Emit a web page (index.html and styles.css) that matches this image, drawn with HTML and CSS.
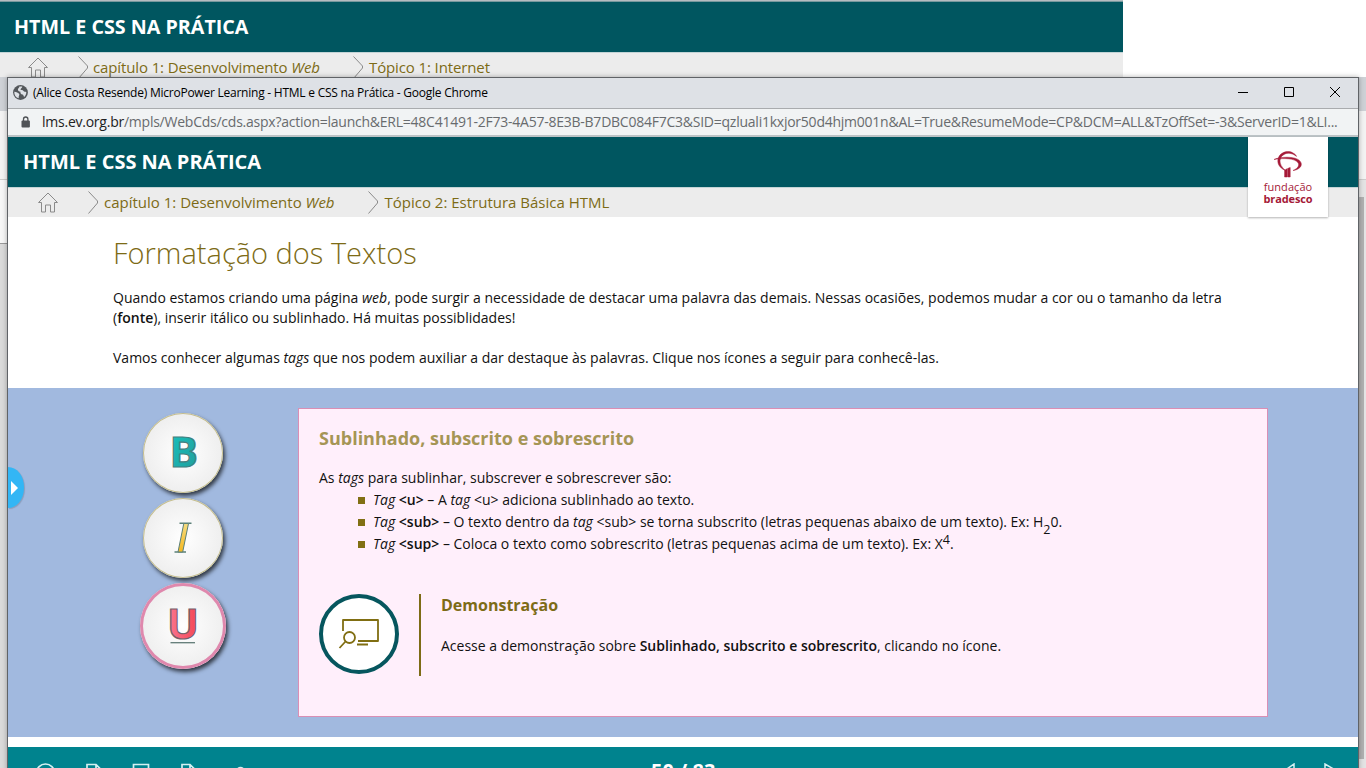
FILE: index.html
```html
<!DOCTYPE html>
<html lang="pt-BR">
<head>
<meta charset="utf-8">
<title>HTML e CSS na Prática</title>
<link rel="stylesheet" href="styles.css">
</head>
<body>
<div class="desktop">
  <section class="back">
    <header class="course"><h1 class="t-back">HTML E CSS NA PRÁTICA</h1></header>
    <nav class="crumbs">
      <svg class="home" width="22" height="21" viewBox="0 0 22 21"><path d="M1.500 10.500 11 1 20.500 10.500H17.500V20H13.500V13H8.500V20H4.500V10.500Z"/></svg>
      <svg class="chev" width="11" height="23" viewBox="0 0 11 23"><path d="M.5 .5 9.5 10V12L.5 22.5"/></svg>
      <span class="c1b">capítulo 1: Desenvolvimento <i>Web</i></span>
      <svg class="chev" width="11" height="23" viewBox="0 0 11 23"><path d="M.5 .5 9.5 10V12L.5 22.5"/></svg>
      <span class="c2b">Tópico 1: Internet</span>
    </nav>
  </section>
  <div class="behind">
    <div class="b-tabs"></div><div class="b-bar"></div><div class="b-low"></div>
    <div class="b-scroll"><i></i></div>
  </div>

  <section class="window">
    <div class="titlebar">
      <svg width="15" height="15" viewBox="0 0 14 14"><circle cx="7" cy="7" r="6.9" fill="#53575b"/><path d="M1.2 6.2C3.4 6.6 4.6 7 5.6 8.2 6.6 9.4 5 9.8 5.4 12.4 2.6 11.6 1 9 1.2 6.2ZM6 1.4 8.6 1.5C8.8 3 7.2 3 7 4.4 8 4.8 9 4.2 9.6 5.4 10 6.4 11.4 6.2 12.4 6.6 12.5 8.4 11.7 10 10.4 11.2 9.8 10 9.8 9 8.8 8.8 7.4 8.4 6.6 7.6 7 6.2 5.6 6.2 4.4 5.4 4.6 4 4.8 3 6 2.6 6 1.4Z" fill="#dee1e6"/></svg>
      <span class="wtitle">(Alice Costa Resende) MicroPower Learning - HTML e CSS na Prática - Google Chrome</span>
      <svg class="controls" width="106" height="12" viewBox="0 0 106 12"><path d="M1 6.5H11M47.5 1.5H56.5V10.5H47.5ZM93 1 103 11M103 1 93 11" fill="none" stroke="#000"/></svg>
    </div>
    <div class="urlbar">
      <svg width="10" height="12" viewBox="0 0 10 12"><path d="M2.5 5V3.2a2.200 2.200 0 0 1 4.400 0V5" fill="none" stroke="#505357" stroke-width="1.300"/><rect x=".5" y="4.500" width="8.400" height="7" rx="1" fill="#505357"/></svg>
      <span class="url"><b>lms.ev.org.br</b>/mpls/WebCds/cds.aspx?action=launch&amp;ERL=48C41491-2F73-4A57-8E3B-B7DBC084F7C3&amp;SID=qzluali1kxjor50d4hjm001n&amp;AL=True&amp;ResumeMode=CP&amp;DCM=ALL&amp;TzOffSet=-3&amp;ServerID=1&amp;LI...</span>
    </div>
    <header class="course"><h1 class="t-front">HTML E CSS NA PRÁTICA</h1>
      <div class="logo">
        <svg width="30" height="28" viewBox="0 0 30 28"><g fill="#a51a38" stroke="#a51a38" stroke-width=".5"><path d="M1 9.500C5 7.500 15 6.300 22 8.200 29 10.300 30 15.500 26 18.300 24.600 19.400 22.500 20.200 20 20.500 25 18.400 28 14.500 23.500 11.200 18 7.700 8 8.400 1 9.500Z"/><path d="M12.500 20.500C6 18 3.500 12.500 5.500 7.500 8 1.500 16 .2 20 3 22 4 23 5.200 23.500 6.400 20 3.700 16 2.300 12 3.900 6 6.500 4.500 14 12.500 20.500Z"/><path d="M11.600 20.300 14 18.800V27H11.600ZM14.600 18.500 17.200 17.500V27H14.600Z"/></g></svg>
        <span class="lg1">fundação</span><span class="lg2">bradesco</span>
      </div>
    </header>
    <nav class="crumbs">
      <svg class="home" width="22" height="21" viewBox="0 0 22 21"><path d="M1.500 10.500 11 1 20.500 10.500H17.500V20H13.500V13H8.500V20H4.500V10.500Z"/></svg>
      <svg class="chev" width="11" height="23" viewBox="0 0 11 23"><path d="M.5 .5 9.500 10V12L.5 22.500"/></svg>
      <span class="c1">capítulo 1: Desenvolvimento <i>Web</i></span>
      <svg class="chev" width="11" height="23" viewBox="0 0 11 23"><path d="M.5 .5 9.500 10V12L.5 22.500"/></svg>
      <span class="c2">Tópico 2: Estrutura Básica HTML</span>
    </nav>
    <main>
      <article class="intro">
        <h2><span>Formatação dos Textos</span></h2>
        <p><span class="p1">Quando estamos criando uma página <i>web</i>, pode surgir a necessidade de destacar uma palavra das demais. Nessas ocasiões, podemos mudar a cor ou o tamanho da letra</span><br><span class="p2">(<b>fonte</b>), inserir itálico ou sublinhado. Há muitas possiblidades!</span></p>
        <p class="p3">Vamos conhecer algumas <i>tags</i> que nos podem auxiliar a dar destaque às palavras. Clique nos ícones a seguir para conhecê-las.</p>
      </article>
      <section class="lesson">
        <button class="drawer"><svg width="8" height="14" viewBox="0 0 8 14"><path d="M0 0 7 7 0 14Z" fill="#fff"/></svg></button>
        <div class="picker">
          <div class="disc"><svg width="80" height="80" viewBox="0 0 80 80"><defs><linearGradient id="gb" x2="1" y2="1"><stop stop-color="#16c5be"/><stop offset="1" stop-color="#23999a"/></linearGradient></defs><text x="26.500" y="54" font-size="41" font-weight="700" textLength="28.500" lengthAdjust="spacingAndGlyphs" fill="url(#gb)" stroke="#45807f" stroke-width="1.200">B</text></svg></div>
          <div class="disc"><svg width="80" height="80" viewBox="0 0 80 80"><defs><linearGradient id="gi" x2="0" y2="1"><stop stop-color="#f5dc80"/><stop offset="1" stop-color="#f5b820"/></linearGradient></defs><path d="M36.500 25.300H48.500M31.500 54H43" stroke="#5b8078" stroke-width="1.500"/><path d="M40.800 25.500H45.500L39.700 54H35Z" fill="url(#gi)" stroke="#5b8078"/></svg></div>
          <div class="disc on"><svg width="80" height="80" viewBox="0 0 80 80"><defs><linearGradient id="gu"><stop stop-color="#fb7791"/><stop offset="1" stop-color="#f34553"/></linearGradient></defs><text x="24" y="53" font-size="41" font-weight="700" textLength="32" lengthAdjust="spacingAndGlyphs" fill="url(#gu)" stroke="#75606a" stroke-width="1.200">U</text><path d="M27.500 56.700H52" stroke="#607b77" stroke-width="1.300"/></svg></div>
        </div>
        <div class="card">
          <h3><span>Sublinhado, subscrito e sobrescrito</span></h3>
          <p class="lead">As <i>tags</i> para sublinhar, subscrever e sobrescrever são:</p>
          <ul>
            <li><span class="l1"><i>Tag</i> <b>&lt;u&gt;</b> – A <i>tag</i> &lt;u&gt; adiciona sublinhado ao texto.</span></li>
            <li><span class="l2"><i>Tag</i> <b>&lt;sub&gt;</b> – O texto dentro da <i>tag</i> &lt;sub&gt; se torna subscrito (letras pequenas abaixo de um texto). Ex: H<sub>2</sub>0.</span></li>
            <li><span class="l3"><i>Tag</i> <b>&lt;sup&gt;</b> – Coloca o texto como sobrescrito (letras pequenas acima de um texto). Ex: X<sup>4</sup>.</span></li>
          </ul>
          <div class="demo">
            <div class="demo-icon"><svg width="42" height="32" viewBox="0 0 42 32"><path d="M5 13V2H40V23H20"/><circle cx="11.500" cy="19.500" r="5.500"/><path d="M7.500 23.500 1.500 30M19 26.500H30"/></svg></div>
            <div class="demo-text"><h4><span>Demonstração</span></h4><p class="acc">Acesse a demonstração sobre <b>Sublinhado, subscrito e sobrescrito</b>, clicando no ícone.</p></div>
          </div>
        </div>
      </section>
    </main>
    <footer>
      <svg class="tools" width="220" height="22" viewBox="0 0 220 22"><g fill="none" stroke="#d3f1f2" stroke-width="1.700"><circle cx="10.500" cy="10" r="9"/><path d="M52 20V1.500H61L66 6.500V20ZM61 1.500V6.500H66M98.500 18V1.500H113.500V18ZM147 20V1.500H155L160 6.500V20ZM155 1.500V6.500H160"/><path d="M202 6.500Q205.500 3 209 6.500" stroke-width="1.800"/></g></svg>
      <strong class="page">50 / 83</strong>
      <svg class="nav" width="56" height="22" viewBox="0 0 56 22"><path d="M12 1V19L2 8ZM43 1V19L55 8Z" fill="none" stroke="#d3f1f2" stroke-width="1.500"/></svg>
    </footer>
  </section>
</div>
</body>
</html>
```
FILE: styles.css
```css
* { box-sizing: border-box; }
body { margin: 0; background: #fff; font-family: "Open Sans", "Noto Sans", sans-serif; color: #111; }
h1, h2, h3, h4, p, ul { margin: 0; padding: 0; }
svg { display: block; flex: none; }
span { white-space: nowrap; }
.desktop { position: relative; width: 1366px; height: 768px; overflow: hidden; }
.back { width: 1123px; height: 78px; overflow: hidden; border-top: 1px solid #b5bcc0; }
.back .course { padding-left: 14px; border-top: 1px solid #77999e; height: 51px; }
.course { display: flex; align-items: center; height: 50px; background: #005660; }
h1 { font-size: 20px; line-height: 26px; color: #fff; font-weight: 700; white-space: nowrap; }
.t-back { font-size: 19.7px; }
.crumbs { display: flex; align-items: center; height: 30px; background: #ececec; border-top: 1px solid #c3d4d6; color: #7d6b16; font-size: 15px; line-height: 20px; padding-left: 29px; }
.crumbs span { padding-bottom: 2px; }
.back .crumbs { padding-left: 27px; letter-spacing: -.12px; }
.home path, .chev path { fill: none; stroke: #8a8a8a; stroke-width: 1; }
.crumbs .chev { margin-right: 5px; }
.back .chev:nth-of-type(2) { margin: 0 4px 0 29px; }
.back .c1b { width: 260px; }
.window .chev:nth-of-type(2) { margin: 0 5px 0 29px; }
.window .c1 { width: 264px; }
.window .c2 { margin-left: .5px; }

.behind { position: absolute; left: 0; top: 77px; width: 1366px; height: 691px; background: #dadada; }
.b-tabs { height: 34px; background: #ced1d6; }
.b-bar { height: 69px; background: #f3f3f3; border-bottom: 1px solid #ccc; }
.b-low { height: 64px; background: #f7f7f7; border-bottom: 1px solid #999; width: 30px; }
.b-scroll { position: absolute; right: 0; top: 103px; width: 8px; bottom: 0; background: #e4e4e4; padding-top: 17px; }
.b-scroll i { display: block; width: 6px; height: 562px; background: #b1b1b1; }

.window { position: absolute; left: 7px; top: 77px; width: 1352px; height: 720px; background: #fff; border: 1px solid #606367; box-shadow: 0 0 5px rgba(0,0,0,.3); }
.titlebar { display: flex; align-items: center; height: 31px; background: #dee1e6; border-bottom: 1px solid #a9abae; padding: 0 15px 2px 5px; font-size: 12px; letter-spacing: -.235px; color: #000; }
.wtitle { margin-left: 5px; flex: 1; }
.urlbar { display: flex; align-items: center; height: 28px; background: #f1f3f4; border-bottom: 2px solid #bcc3c6; padding: 0 0 1px 13px; font-size: 14px; letter-spacing: -.242px; color: #686b6e; }
.url { margin-left: 11px; }
.url b { font-weight: 400; color: #222; }
.window .course { position: relative; padding-left: 15px; }
.logo { position: absolute; right: 30px; top: 0; width: 80px; height: 80px; background: #fff; z-index: 2; box-shadow: 0 1px 2px rgba(0,0,0,.3); display: flex; flex-direction: column; align-items: center; padding-top: 13px; color: #a51a38; font-size: 11px; line-height: 12px; }
.lg1 { margin-top: 3px; letter-spacing: .05px; }
.lg2 { font-weight: 700; font-size: 11px; letter-spacing: -.1px; }
.intro { height: 171px; padding: 18px 0 0 105px; font-size: 14px; line-height: 20px; }
.p1 { letter-spacing: .005px; }
b { font-weight: 600; }
h2 { font-size: 29px; font-weight: 300; line-height: 36px; color: #7d6b16; margin-bottom: 17px; }
.p3 { margin-top: 20px; white-space: nowrap; }
.lesson { position: relative; height: 349px; background: #a1b9df; padding: 20px 0 0 132px; display: flex; }
.drawer { position: absolute; left: 0; top: 79px; width: 16px; height: 41px; border: 0; padding: 0 0 0 3px; background: #33b6f5; border-radius: 0 16px 16px 0 / 0 20px 20px 0; display: flex; align-items: center; box-shadow: 1px 1px 1px rgba(0,0,0,.15); }
.picker { width: 158px; display: flex; flex-direction: column; gap: 5px; padding-top: 5px; }
.disc { width: 80px; height: 80px; margin-left: 3px; border-radius: 50%; background: radial-gradient(#fff, #ececec 80%); box-shadow: 0 0 0 1px #c4bd8d inset, 2px 3px 4px rgba(0,0,0,.7); }
.disc.on { width: 86px; height: 86px; margin-left: 0; padding: 3px; box-shadow: 0 0 0 3px #df88ad inset, 2px 3px 4px rgba(0,0,0,.7); }
.card { width: 970px; height: 309px; background: #ffeffb; border: 1px solid #d98fb5; padding: 16px 20px; font-size: 14px; line-height: 22px; }
h3 { font-size: 18px; line-height: 26px; color: #a59555; margin-bottom: 16px; }
.lead { white-space: nowrap; }
ul { list-style: none; padding-left: 39px; }
li { display: flex; align-items: center; height: 22px; }
li::before { content: ""; width: 7px; height: 7px; background: #816f13; margin-right: 8px; }
sub, sup { font-size: 12.5px; line-height: 0; }
sub { vertical-align: -7px; }
sup { vertical-align: 5px; }
.demo { display: flex; margin-top: 39px; }
.demo-icon { width: 80px; height: 80px; border: 4px solid #06565e; border-radius: 50%; background: #fff; margin-right: 20px; display: grid; place-items: center; }
.demo-icon path, .demo-icon circle { fill: none; stroke: #806e12; stroke-width: 1.8; stroke-linejoin: round; }
.demo-text { border-left: 2px solid #7d6b16; height: 82px; padding-left: 20px; }
h4 { font-size: 16px; line-height: 22px; color: #7d6b16; margin-bottom: 19px; }
.acc { white-space: nowrap; }
footer { display: flex; align-items: flex-start; height: 60px; margin-top: 10px; background: #00838e; padding: 16px 20px 0 27px; }
.page { color: #fff; font-size: 20px; line-height: 20px; margin: -2px 0 0 396px; }
.nav { margin-left: auto; }
```
